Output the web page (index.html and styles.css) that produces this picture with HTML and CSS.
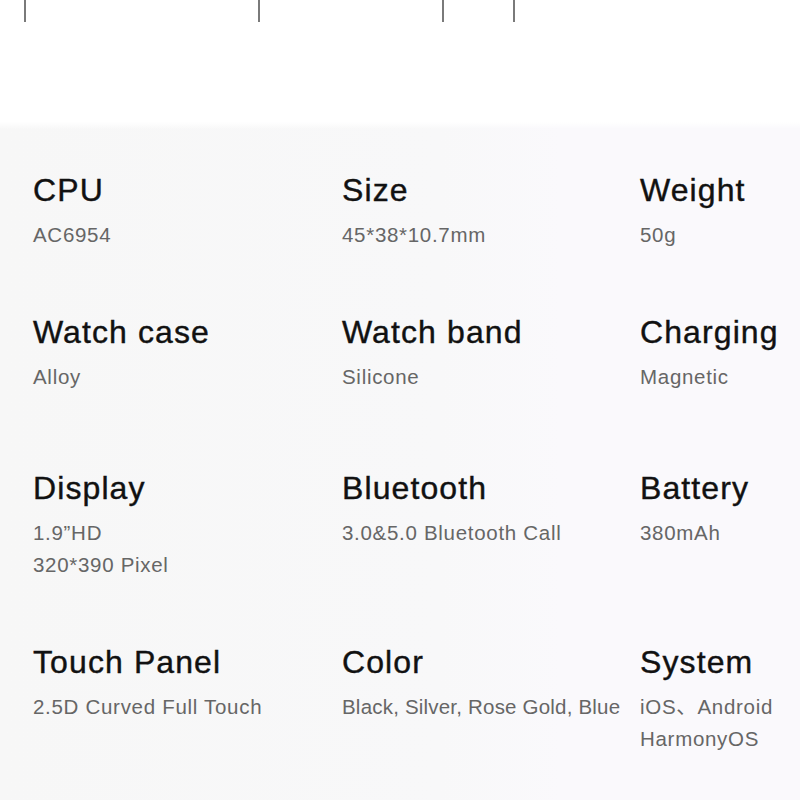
FILE: index.html
```html
<!DOCTYPE html>
<html lang="en">
<head>
<meta charset="utf-8">
<title>Specifications</title>
<link rel="stylesheet" href="styles.css">
</head>
<body>
<div class="top">
  <div class="ticks">
    <span class="tick"></span>
    <span class="tick"></span>
    <span class="tick"></span>
    <span class="tick"></span>
  </div>
</div>
<section class="specs">
  <div class="row">
    <div class="cell"><h3 class="name">CPU</h3><p class="val">AC6954</p></div>
    <div class="cell"><h3 class="name">Size</h3><p class="val">45*38*10.7mm</p></div>
    <div class="cell"><h3 class="name">Weight</h3><p class="val">50g</p></div>
  </div>
  <div class="row row-tall">
    <div class="cell"><h3 class="name">Watch case</h3><p class="val">Alloy</p></div>
    <div class="cell"><h3 class="name">Watch band</h3><p class="val">Silicone</p></div>
    <div class="cell"><h3 class="name">Charging</h3><p class="val">Magnetic</p></div>
  </div>
  <div class="row">
    <div class="cell"><h3 class="name">Display</h3><p class="val">1.9”HD<br>320*390 Pixel</p></div>
    <div class="cell"><h3 class="name">Bluetooth</h3><p class="val">3.0&amp;5.0 Bluetooth Call</p></div>
    <div class="cell"><h3 class="name">Battery</h3><p class="val">380mAh</p></div>
  </div>
  <div class="row">
    <div class="cell"><h3 class="name">Touch Panel</h3><p class="val">2.5D Curved Full Touch</p></div>
    <div class="cell"><h3 class="name">Color</h3><p class="val val-tight">Black, Silver, Rose Gold, Blue</p></div>
    <div class="cell"><h3 class="name">System</h3><p class="val">iOS、Android<br>HarmonyOS</p></div>
  </div>
</section>
</body>
</html>
```

FILE: styles.css
```css
html, body {
  margin: 0;
  padding: 0;
  background: #ffffff;
}

body {
  width: 800px;
  height: 800px;
  overflow: hidden;
  font-family: "Liberation Sans", "Noto Sans CJK SC", Arial, sans-serif;
}

.top {
  height: 122px;
  background: #ffffff;
}

.ticks {
  display: grid;
  grid-template-columns: 24px 234px 184px 71px 1fr;
}

.tick {
  display: block;
  width: 1.5px;
  height: 22px;
  background: #7a7a7a;
}

.tick:first-child {
  grid-column: 2;
}

.specs {
  height: 678px;
  box-sizing: border-box;
  padding: 48px 0 0 33px;
  background:
    linear-gradient(180deg, #ffffff 0px, rgba(255,255,255,0) 7px),
    linear-gradient(90deg, #f7f7f7 0%, #f8f8f9 55%, #faf9fc 70%, #faf9fc 100%);
}

.row {
  display: grid;
  grid-template-columns: 309px 298px 1fr;
  margin-bottom: 61px;
}

.row-tall {
  margin-bottom: 75px;
}

.cell {
  min-width: 0;
}

.name {
  margin: 0;
  font-size: 32px;
  line-height: 40px;
  font-weight: 400;
  color: #111111;
  letter-spacing: 1.1px;
  white-space: nowrap;
  -webkit-text-stroke: 0.4px #111111;
}

.val {
  margin: 9px 0 0;
  font-size: 20.5px;
  line-height: 32px;
  color: #666666;
  letter-spacing: 0.7px;
  white-space: nowrap;
}

.val-tight {
  letter-spacing: 0.2px;
}
```
